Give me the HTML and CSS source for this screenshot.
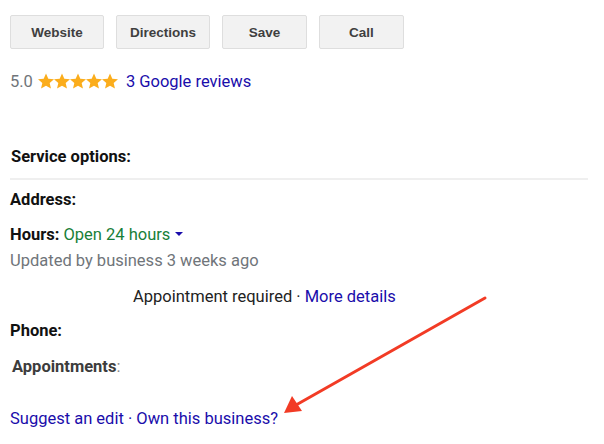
FILE: index.html
```html
<!DOCTYPE html>
<html>
<head>
<meta charset="utf-8">
<link rel="stylesheet" href="styles.css">
</head>
<body>
<div class="page">
  <div class="buttons">
    <div class="btn w94">Website</div>
    <div class="btn w94">Directions</div>
    <div class="btn w85">Save</div>
    <div class="btn w85">Call</div>
  </div>
  <div class="rating">
    <span class="score">5.0</span>
    <span class="stars">
      <svg viewBox="2 2.2 20 19.4"><path d="M12 2.5l2.9 6.6 7.1.6-5.4 4.7 1.6 7-6.2-3.7-6.2 3.7 1.6-7L2 9.7l7.1-.6z"/></svg>
      <svg viewBox="2 2.2 20 19.4"><path d="M12 2.5l2.9 6.6 7.1.6-5.4 4.7 1.6 7-6.2-3.7-6.2 3.7 1.6-7L2 9.7l7.1-.6z"/></svg>
      <svg viewBox="2 2.2 20 19.4"><path d="M12 2.5l2.9 6.6 7.1.6-5.4 4.7 1.6 7-6.2-3.7-6.2 3.7 1.6-7L2 9.7l7.1-.6z"/></svg>
      <svg viewBox="2 2.2 20 19.4"><path d="M12 2.5l2.9 6.6 7.1.6-5.4 4.7 1.6 7-6.2-3.7-6.2 3.7 1.6-7L2 9.7l7.1-.6z"/></svg>
      <svg viewBox="2 2.2 20 19.4"><path d="M12 2.5l2.9 6.6 7.1.6-5.4 4.7 1.6 7-6.2-3.7-6.2 3.7 1.6-7L2 9.7l7.1-.6z"/></svg>
    </span>
    <a class="link">3 Google reviews</a>
  </div>
  <div class="row service"><b>Service options:</b></div>
  <div class="divider"></div>
  <div class="row address"><b>Address:</b></div>
  <div class="row hours"><b>Hours:</b> <span class="open">Open 24 hours</span><span class="caret"></span></div>
  <div class="row updated">Updated by business 3 weeks ago</div>
  <div class="row appt">Appointment required · <a class="link">More details</a></div>
  <div class="row phone"><b>Phone:</b></div>
  <div class="row appts"><b class="soft">Appointments</b><span class="colon">:</span></div>
  <div class="row suggest"><a class="link">Suggest an edit</a><span class="link"> · </span><a class="link">Own this business?</a></div>
  <svg class="arrow" width="604" height="444" viewBox="0 0 604 444">
    <line x1="485" y1="298" x2="296" y2="405" stroke="#f23b25" stroke-width="3" stroke-linecap="round"/>
    <polygon points="284,413 292,396 302,411" fill="#f23b25"/>
  </svg>
</div>
</body>
</html>
```

FILE: styles.css
```css
html, body {
  margin: 0;
  padding: 0;
  background: #fff;
}
.page {
  position: relative;
  width: 604px;
  height: 444px;
  overflow: hidden;
  font-family: Roboto, "Liberation Sans", Arial, sans-serif;
  font-size: 16.5px;
  color: #222;
}
.buttons {
  display: flex;
  gap: 12px;
  padding: 15px 0 0 10px;
}
.btn {
  box-sizing: border-box;
  height: 34px;
  display: flex;
  align-items: center;
  justify-content: center;
  background: #f2f2f2;
  border: 1px solid #dedede;
  border-radius: 2px;
  font-family: "Liberation Sans", Arial, sans-serif;
  font-weight: bold;
  font-size: 13.5px;
  color: #3f3f3f;
}
.w94 { width: 94px; }
.w85 { width: 85px; }
.rating {
  display: flex;
  align-items: center;
  height: 20px;
  margin: 22px 0 0 10px;
}
.score { color: #70757a; }
.stars {
  display: flex;
  margin: 0 8px 0 5px;
}
.stars svg {
  width: 16px;
  height: 16px;
  fill: #fbad1c;
}
.link {
  color: #1a0dab;
  text-decoration: none;
}
.row {
  line-height: 20px;
  height: 20px;
  padding-left: 10px;
}
.row b {
  font-weight: bold;
  font-size: 16.5px;
  color: #111;
}
.service { margin-top: 56px; padding-left: 11px; }
.divider {
  margin: 11px 16px 0 10px;
  height: 2px;
  background: #efefef;
}
.address { margin-top: 10px; }
.hours { margin-top: 15px; }
.open { color: #188038; }
.caret {
  display: inline-block;
  width: 0;
  height: 0;
  margin-left: 5px;
  vertical-align: 4px;
  border-left: 4px solid transparent;
  border-right: 4px solid transparent;
  border-top: 4px solid #1a0dab;
}
.updated { margin-top: 6px; color: #70757a; }
.appt { margin-top: 16px; padding-left: 133px; color: #222; }
.phone { margin-top: 14px; }
.appts { margin-top: 16px; padding-left: 12px; }
.row b.soft { color: #3c3c3c; }
.colon { color: #888; }
.suggest { margin-top: 32px; }
.arrow {
  position: absolute;
  left: 0;
  top: 0;
  pointer-events: none;
}
```
